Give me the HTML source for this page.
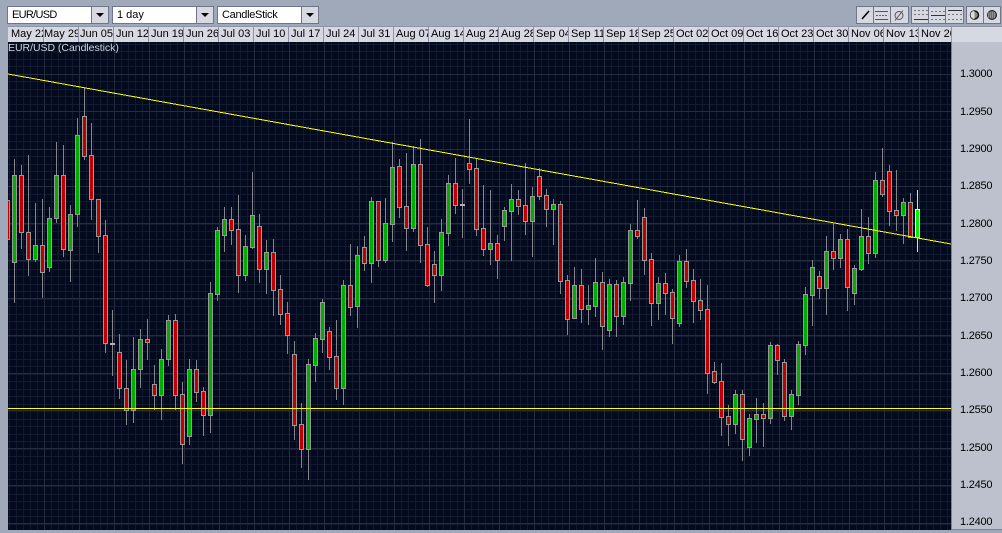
<!DOCTYPE html>
<html><head><meta charset="utf-8"><style>
html,body{margin:0;padding:0;width:1002px;height:533px;overflow:hidden;background:#a0a9ba}
body{position:relative;font-family:"Liberation Sans",sans-serif;font-size:11px;color:#000}
.a{position:absolute;box-sizing:border-box}
.dd{top:6px;height:18px;width:102px;border:1px solid #6e7687;background:#fff;font-size:11px;line-height:16px;padding-left:4px}
.dd i{position:absolute;right:0;top:0;width:16px;height:16px;background:#d6d9e2;border-left:1px solid #6e7687}
.dd i:after{content:"";position:absolute;left:4px;top:6px;border:4px solid transparent;border-top:4px solid #000;border-bottom:0}
#hd{left:8px;top:26px;width:994px;height:16px;background:#d6d9e2;border-top:1px solid #8d95a6}
.c{position:absolute;top:0;height:15px;width:35px;overflow:hidden;border-right:1px solid #8d95a6;box-sizing:border-box;line-height:15px;white-space:nowrap;font-size:11px}
.p{position:absolute;left:960px;width:40px;font-size:11px;line-height:12px;color:#000;letter-spacing:-.02em}
#ch{left:8px;top:42px;width:943px;height:488px;background-color:#030a1e;
background-image:linear-gradient(#111a2e 1px,transparent 1px),linear-gradient(#111a2e 1px,transparent 1px),linear-gradient(90deg,#111a2e 1px,transparent 1px);
background-size:100% 15px,100% 15px,7px 100%;background-position:0 2px,0 9px,1px 0}
#ax{left:951px;top:42px;width:51px;height:488px;background:#bcc1cd;border-left:1px solid #7b8497;border-bottom:1px solid #7b8497}
.tb{top:6px;height:18px;background:#d6d9e2;border:1px solid #6e7687}
.tb b{position:absolute;top:0;width:1px;height:16px;background:#6e7687}
</style></head><body>
<div class="a dd" style="left:7px;letter-spacing:-.7px">EUR/USD<i></i></div>
<div class="a dd" style="left:112px">1 day<i></i></div>
<div class="a dd" style="left:217px;letter-spacing:-.3px">CandleStick<i></i></div>

<div class="a tb" style="left:856px;width:53px"><b style="left:16px"></b><b style="left:33px"></b></div>
<div class="a tb" style="left:911px;width:53px"><b style="left:16px"></b><b style="left:33px"></b></div>
<div class="a tb" style="left:966px;width:35px"><b style="left:16px"></b></div>
<svg class="a" style="left:0;top:0" width="1002" height="26" viewBox="0 0 1002 26">
<path d="M862 19L869 11" stroke="#000" stroke-width="1.6" fill="none"/>
<path d="M875 11.5h13M875 19.5h13" stroke="#555" fill="none"/><path d="M876 15.5h12" stroke="#666" stroke-dasharray="2 1" fill="none"/>
<circle cx="899" cy="15.5" r="4" fill="none" stroke="#555"/><path d="M895 20.5L903 10.5" stroke="#555" fill="none"/>
<path d="M914 10.5h14M914 14.5h14" stroke="#777" stroke-dasharray="2 2" fill="none"/><path d="M914 19.5h14" stroke="#333" fill="none"/>
<path d="M931 11.5h14M931 19.5h14" stroke="#777" stroke-dasharray="2 2" fill="none"/><path d="M931 15.5h14" stroke="#333" fill="none"/>
<path d="M948 14.5h14M948 19.5h14" stroke="#777" stroke-dasharray="2 2" fill="none"/><path d="M948 10.5h14" stroke="#333" fill="none"/>
<circle cx="974.5" cy="15" r="4" fill="#888" stroke="#111" stroke-width="1.5"/><path d="M974.5 11a4 4 0 0 0 0 8z" fill="#ddd"/>
<circle cx="992" cy="15" r="4.5" fill="#666" stroke="#222"/><path d="M988 13h8M988 15h8M988 17h8" stroke="#bbb" stroke-dasharray="1 1" fill="none"/>
</svg>

<div class="a" id="hd">
<div class="c" style="left:0;width:36px;padding-left:3px">May 22</div><div class="c" style="left:36px">May 29</div><div class="c" style="left:71px;padding-left:1px">Jun 05</div><div class="c" style="left:106px;padding-left:2px">Jun 12</div><div class="c" style="left:141px;padding-left:2px">Jun 19</div><div class="c" style="left:176px;padding-left:2px">Jun 26</div><div class="c" style="left:211px;padding-left:2px">Jul 03</div><div class="c" style="left:246px;padding-left:2px">Jul 10</div><div class="c" style="left:281px;padding-left:2px">Jul 17</div><div class="c" style="left:316px;padding-left:2px">Jul 24</div><div class="c" style="left:351px;padding-left:2px">Jul 31</div><div class="c" style="left:386px;padding-left:2px">Aug 07</div><div class="c" style="left:421px;padding-left:2px">Aug 14</div><div class="c" style="left:456px;padding-left:2px">Aug 21</div><div class="c" style="left:491px;padding-left:2px">Aug 28</div><div class="c" style="left:526px;padding-left:2px">Sep 04</div><div class="c" style="left:561px;padding-left:2px">Sep 11</div><div class="c" style="left:596px;padding-left:2px">Sep 18</div><div class="c" style="left:631px;padding-left:2px">Sep 25</div><div class="c" style="left:666px;padding-left:2px">Oct 02</div><div class="c" style="left:701px;padding-left:2px">Oct 09</div><div class="c" style="left:736px;padding-left:2px">Oct 16</div><div class="c" style="left:771px;padding-left:2px">Oct 23</div><div class="c" style="left:806px;padding-left:2px">Oct 30</div><div class="c" style="left:841px;padding-left:2px">Nov 06</div><div class="c" style="left:876px;padding-left:2px">Nov 13</div><div class="c" style="left:911px;padding-left:2px;width:33px">Nov 20</div>
</div>

<div class="a" id="ch"></div>
<svg class="a" style="left:0;top:0" width="1002" height="533" viewBox="0 0 1002 533">
<g shape-rendering="crispEdges" fill="none">
<path stroke="#252c3d" d="M8 74.5H951M8 111.5H951M8 149.5H951M8 186.5H951M8 223.5H951M8 260.5H951M8 298.5H951M8 335.5H951M8 373.5H951M8 410.5H951M8 448.5H951M8 485.5H951M8 523.5H951M44.5 42V530M79.5 42V530M114.5 42V530M149.5 42V530M184.5 42V530M219.5 42V530M254.5 42V530M289.5 42V530M324.5 42V530M359.5 42V530M394.5 42V530M429.5 42V530M464.5 42V530M499.5 42V530M534.5 42V530M569.5 42V530M604.5 42V530M639.5 42V530M674.5 42V530M709.5 42V530M744.5 42V530M779.5 42V530M814.5 42V530M849.5 42V530M884.5 42V530M919.5 42V530"/>
<path stroke="#85858c" d="M7.5 190V250M14.5 159V303M21.5 165V249M28.5 155V276M35.5 203V262M42.5 199V298M49.5 207V272M56.5 142V223M63.5 145V257M70.5 205V282M77.5 118V227M84.5 88V160M91.5 123V220M98.5 199V253M105.5 220V353M112.5 310V376M119.5 334V399M126.5 360V425M133.5 337V423M140.5 329V388M147.5 319V360M154.5 365V410M161.5 349V420M168.5 315V366M175.5 314V410M182.5 382V464M189.5 359V445M196.5 360V402M203.5 387V436M210.5 282V433M217.5 227V301M224.5 207V252M231.5 207V245M238.5 195V293M245.5 235V281M252.5 172V249M259.5 214V283M266.5 240V294M273.5 239V316M280.5 275V325M287.5 302V354M294.5 341V440M301.5 403V468M308.5 359V480M315.5 333V382M322.5 299V353M329.5 327V370M336.5 320V400M343.5 280V405M350.5 244V316M357.5 246V328M364.5 236V271M371.5 197V283M378.5 201V267M385.5 198V263M392.5 142V242M399.5 159V218M406.5 153V251M413.5 146V232M420.5 139V263M427.5 227V287M434.5 251V303M441.5 219V291M448.5 175V246M455.5 158V214M462.5 189V238M469.5 119V184M476.5 159V236M483.5 185V256M490.5 190V265M497.5 235V279M504.5 207V241M511.5 184V261M518.5 190V215M525.5 163V235M532.5 187V257M539.5 168V200M546.5 189V227M553.5 199V245M560.5 201V294M567.5 275V335M574.5 267V319M581.5 269V323M588.5 285V325M595.5 258V317M602.5 272V350M609.5 279V337M616.5 280V337M623.5 277V325M630.5 224V301M637.5 200V239M644.5 208V275M651.5 253V326M658.5 277V320M665.5 273V315M672.5 289V344M679.5 255V327M686.5 249V288M693.5 269V323M700.5 279V320M707.5 285V394M714.5 362V384M721.5 363V436M728.5 405V446M735.5 390V434M742.5 390V461M749.5 414V456M756.5 398V443M763.5 403V447M770.5 342V424M777.5 344V375M784.5 359V421M791.5 390V430M798.5 341V405M805.5 287V355M812.5 260V326M819.5 271V299M826.5 236V315M833.5 224V270M840.5 234V268M847.5 229V311M854.5 265V305M861.5 209V271M868.5 217V264M875.5 172V258M882.5 148V197M889.5 165V226M896.5 170V231M903.5 198V244M910.5 193V237"/>
<path stroke="#dcdcdc" d="M917.5 190V252"/>
<path stroke="#999" fill="#c00000" d="M5.5 200.5h4v39h-4zM19.5 175.5h4v57h-4zM26.5 232.5h4v27h-4zM40.5 245.5h4v27h-4zM61.5 175.5h4v74h-4zM82.5 116.5h4v40h-4zM89.5 155.5h4v44h-4zM96.5 199.5h4v37h-4zM103.5 235.5h4v108h-4zM117.5 352.5h4v36h-4zM124.5 388.5h4v22h-4zM145.5 339.5h4v3h-4zM152.5 384.5h4v11h-4zM173.5 320.5h4v75h-4zM180.5 394.5h4v50h-4zM194.5 369.5h4v23h-4zM201.5 391.5h4v24h-4zM229.5 219.5h4v11h-4zM236.5 229.5h4v46h-4zM257.5 226.5h4v43h-4zM271.5 252.5h4v38h-4zM278.5 289.5h4v25h-4zM285.5 313.5h4v22h-4zM292.5 354.5h4v71h-4zM299.5 424.5h4v25h-4zM327.5 331.5h4v26h-4zM334.5 356.5h4v32h-4zM348.5 285.5h4v22h-4zM362.5 247.5h4v16h-4zM376.5 201.5h4v59h-4zM397.5 166.5h4v41h-4zM404.5 206.5h4v22h-4zM418.5 164.5h4v81h-4zM425.5 244.5h4v41h-4zM432.5 264.5h4v11h-4zM453.5 183.5h4v22h-4zM467.5 163.5h4v6h-4zM474.5 168.5h4v61h-4zM481.5 228.5h4v21h-4zM495.5 243.5h4v17h-4zM516.5 199.5h4v7h-4zM523.5 205.5h4v16h-4zM537.5 176.5h4v20h-4zM544.5 195.5h4v14h-4zM558.5 204.5h4v77h-4zM565.5 280.5h4v39h-4zM579.5 285.5h4v24h-4zM600.5 282.5h4v44h-4zM614.5 284.5h4v32h-4zM635.5 230.5h4v6h-4zM642.5 217.5h4v43h-4zM649.5 259.5h4v44h-4zM663.5 283.5h4v10h-4zM670.5 292.5h4v26h-4zM684.5 261.5h4v20h-4zM691.5 280.5h4v21h-4zM698.5 300.5h4v10h-4zM705.5 309.5h4v64h-4zM712.5 371.5h4v11h-4zM719.5 381.5h4v36h-4zM726.5 416.5h4v8h-4zM740.5 394.5h4v45h-4zM761.5 414.5h4v4h-4zM775.5 345.5h4v15h-4zM782.5 362.5h4v54h-4zM817.5 276.5h4v12h-4zM831.5 251.5h4v7h-4zM845.5 239.5h4v48h-4zM866.5 236.5h4v17h-4zM880.5 180.5h4v14h-4zM887.5 171.5h4v40h-4zM894.5 210.5h4v5h-4zM908.5 202.5h4v35h-4z"/>
<path stroke="#999" fill="#00ae00" d="M12.5 175.5h4v87h-4zM33.5 245.5h4v14h-4zM47.5 218.5h4v49h-4zM54.5 175.5h4v43h-4zM68.5 214.5h4v36h-4zM75.5 135.5h4v79h-4zM131.5 369.5h4v41h-4zM138.5 339.5h4v30h-4zM159.5 359.5h4v36h-4zM166.5 320.5h4v39h-4zM187.5 369.5h4v67h-4zM208.5 293.5h4v122h-4zM215.5 230.5h4v64h-4zM222.5 219.5h4v16h-4zM243.5 246.5h4v29h-4zM250.5 215.5h4v32h-4zM264.5 252.5h4v17h-4zM306.5 364.5h4v85h-4zM313.5 338.5h4v27h-4zM320.5 302.5h4v37h-4zM341.5 285.5h4v103h-4zM355.5 255.5h4v51h-4zM369.5 201.5h4v62h-4zM383.5 223.5h4v37h-4zM390.5 167.5h4v57h-4zM411.5 164.5h4v64h-4zM439.5 232.5h4v43h-4zM446.5 183.5h4v50h-4zM488.5 243.5h4v6h-4zM502.5 210.5h4v16h-4zM509.5 199.5h4v12h-4zM530.5 196.5h4v25h-4zM551.5 204.5h4v5h-4zM572.5 285.5h4v33h-4zM586.5 305.5h4v4h-4zM593.5 282.5h4v24h-4zM607.5 284.5h4v46h-4zM621.5 282.5h4v34h-4zM628.5 230.5h4v53h-4zM656.5 283.5h4v20h-4zM677.5 261.5h4v62h-4zM733.5 394.5h4v30h-4zM747.5 418.5h4v29h-4zM754.5 414.5h4v5h-4zM768.5 345.5h4v73h-4zM789.5 394.5h4v22h-4zM796.5 344.5h4v51h-4zM803.5 294.5h4v51h-4zM810.5 267.5h4v28h-4zM824.5 251.5h4v37h-4zM838.5 239.5h4v19h-4zM852.5 268.5h4v25h-4zM859.5 236.5h4v33h-4zM873.5 180.5h4v73h-4zM901.5 202.5h4v13h-4z"/>
<path stroke="#b5b5b5" fill="#b5b5b5" d="M110.5 343.5h4v1h-4zM460.5 204.5h4v1h-4z"/>
<path stroke="#eee" fill="#00ee00" d="M915.5 209.5h4v28h-4z"/>
<path stroke="#ffff00" d="M8 408.5H951"/>
<line x1="8" y1="74" x2="951" y2="244" stroke="#ffff00"/>
</g>
</svg>
<div class="a" style="left:0;top:42px;width:8px;height:491px;background:#a0a9ba"></div>
<div class="a" style="left:8px;top:41px;color:#d0d4de;font-size:10.5px;line-height:14px;letter-spacing:-.03px">EUR/USD (Candlestick)</div>

<div class="a" id="ax"></div>
<div class="p" style="top:68px">1.3000</div><div class="p" style="top:106px">1.2950</div><div class="p" style="top:143px">1.2900</div><div class="p" style="top:180px">1.2850</div><div class="p" style="top:218px">1.2800</div><div class="p" style="top:255px">1.2750</div><div class="p" style="top:292px">1.2700</div><div class="p" style="top:330px">1.2650</div><div class="p" style="top:367px">1.2600</div><div class="p" style="top:404px">1.2550</div><div class="p" style="top:442px">1.2500</div><div class="p" style="top:479px">1.2450</div><div class="p" style="top:516px">1.2400</div>
</body></html>
